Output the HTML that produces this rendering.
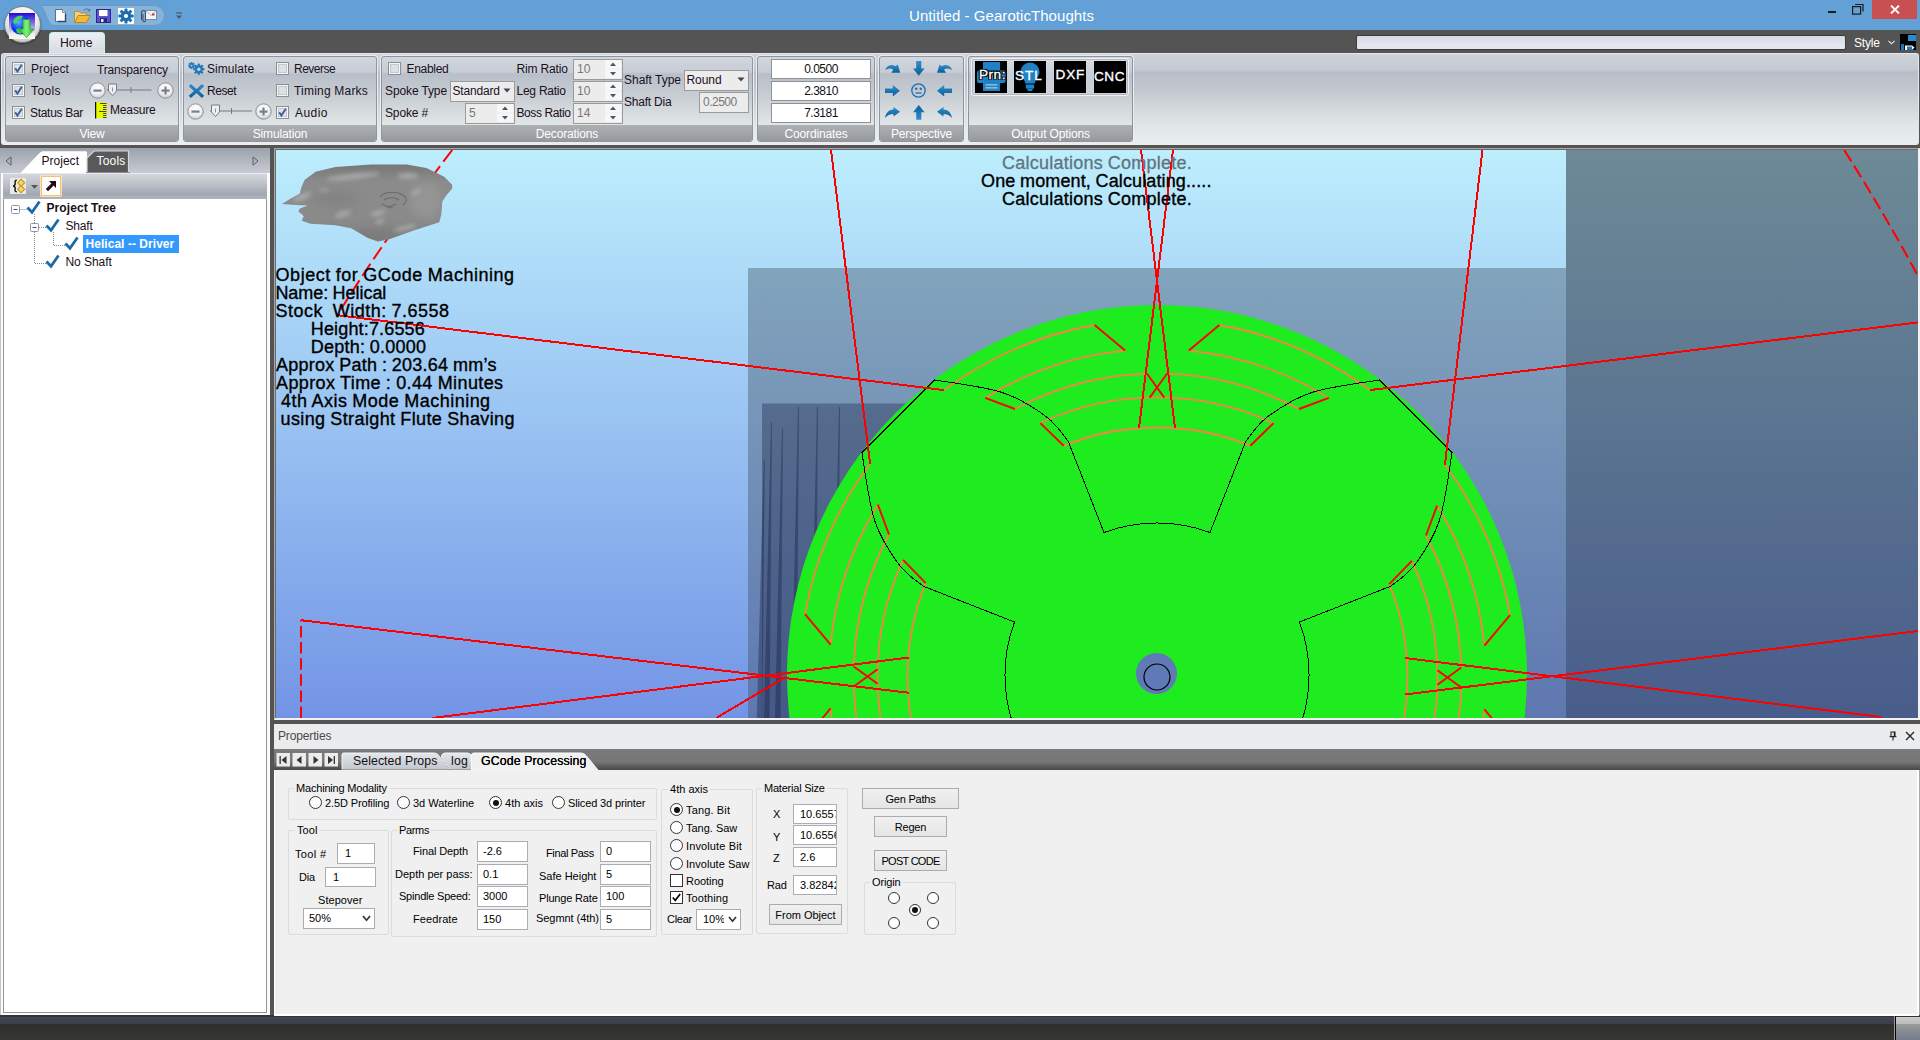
<!DOCTYPE html>
<html><head><meta charset="utf-8"><title>Untitled - GearoticThoughts</title>
<style>
*{box-sizing:border-box;margin:0;padding:0}
html,body{width:1920px;height:1040px;overflow:hidden;background:#545454;font-family:"Liberation Sans",sans-serif;font-size:12px;color:#1a1020}
.abs,.abs>*{position:absolute}
#title{left:0;top:0;width:1920px;height:30px;background:#62a0d5}
#title .cap{left:909px;top:7px;white-space:nowrap;font-size:15px;color:#fff;letter-spacing:-0.2px}
#tabrow{left:0;top:30px;width:1920px;height:23px;background:#545454}
#ribbon{left:1px;top:53px;width:1918px;height:92px;border-radius:3px;border:1px solid #e4e8ec;border-bottom:2px solid #ececec;
 background:linear-gradient(#cfd4db 0,#c4c9d2 16px,#b7bdc7 18px,#c6cbd2 40px,#e0e5e6 70px,#e9efee 90px)}
.grp{top:3px;height:86px;border:1px solid #8f959c;border-radius:3px;box-shadow:0 0 0 1px #e9edf0;
 background:linear-gradient(#d2d7de 0,#c7ccd5 15px,#b9bfc9 17px,#c9ced4 40px,#e2e7e8 69px)}
.grp .lbl{position:absolute;left:0;right:0;bottom:0;height:16px;background:linear-gradient(#aeb1b4,#96999d);color:#fff;text-align:center;font-size:12px;line-height:18.500px;border-radius:0 0 2px 2px;letter-spacing:-.15px}
.t{white-space:nowrap;font-size:12px;line-height:14px;color:#1a1020}
.cb{width:13px;height:13px;border:1px solid #8e8f8f;background:linear-gradient(135deg,#dfe3e8,#fafbfc)}
.cb.on:after{content:"";position:absolute;left:2px;top:1px;width:7px;height:8px;}
.inp{height:21px;border:1px solid #9a9a9c;background:#ececec;font-size:12px;line-height:18px;color:#777;padding-left:3px;white-space:nowrap;overflow:hidden}
.inpw{height:20px;border:1px solid #8e9399;background:#fff;font-size:12px;line-height:18px;color:#111;text-align:center}
</style></head><body>
<div class="abs" id="title">
 <div class="cap" style="letter-spacing:0.058px">Untitled - GearoticThoughts</div>
</div>
<div class="abs" id="tabrow"></div>
<!-- ===== title bar content ===== -->
<div class="abs" style="position:absolute;left:0;top:0;width:1920px;height:53px">
 <!-- QAT pill -->
 <svg style="left:36px;top:4px" width="132" height="24" viewBox="0 0 132 24"><path d="M2.5 1.5 H118.500 a10 10 0 0 1 0 20 H18 C10 21.500 10 1.500 2.5 1.500Z" fill="#86b3da" stroke="#6b97c2" stroke-width="1"/></svg>
 <!-- orb -->
 <div style="left:4px;top:6px;width:37px;height:37px;border-radius:50%;background:radial-gradient(circle at 50% 35%,#ffffff 0,#f1f1f1 45%,#c9c9c9 78%,#a8a8a8 100%);border:1px solid #7a7f86;box-shadow:0 1px 2px rgba(0,0,0,.45)"></div>
 <svg style="left:9px;top:13px" width="26" height="26" viewBox="0 0 26 26">
  <defs><linearGradient id="og" x1="0" y1="0" x2="0" y2="1"><stop offset="0" stop-color="#2406d6"/><stop offset=".45" stop-color="#8f84e2"/><stop offset=".8" stop-color="#eeeef0"/><stop offset="1" stop-color="#f8f8e8"/></linearGradient>
  <radialGradient id="gl" cx=".4" cy=".35" r=".7"><stop offset="0" stop-color="#5ab4ff"/><stop offset=".6" stop-color="#0a3cf0"/><stop offset="1" stop-color="#0416c8"/></radialGradient>
  <linearGradient id="ga" x1="0" y1="0" x2="1" y2="0"><stop offset="0" stop-color="#2fc52f"/><stop offset=".5" stop-color="#7cf27c"/><stop offset="1" stop-color="#1fa81f"/></linearGradient></defs>
  <rect width="26" height="26" fill="url(#og)"/>
  <circle cx="11.600" cy="12" r="9.6" fill="url(#gl)"/>
  <path d="M4 8 C6 3.500 10 2 14 3 L12 6 L9 7 L8 10 L5 11Z" fill="#4fd060"/>
  <path d="M7 16 l4 -1 l3 3 l-2 3 l-4 -1Z" fill="#3cc84c"/>
  <path d="M14 6.500 H21 V16 H25 L17.600 24.800 L10.200 16 H14Z" fill="url(#ga)" stroke="#1c9a1c" stroke-width=".6"/>
 </svg>
 <!-- new doc -->
 <svg style="left:55px;top:9px" width="12" height="14" viewBox="0 0 12 14"><path d="M.5.5H7.500L10.500 3.500V12.500H.5Z" fill="#fff" stroke="#5a6f92" stroke-width="1"/><path d="M3 12.500H10.500V5" stroke="#32456a" stroke-width="1.4" fill="none"/><path d="M7.500.5V3.500H10.500" fill="#dde5f2" stroke="#5a6f92" stroke-width=".8"/></svg>
 <!-- folder -->
 <svg style="left:74px;top:8px" width="17" height="16" viewBox="0 0 17 16"><path d="M.5 14.500V3.500H5l1.500 1.500H12.500V14.500Z" fill="#f5d57a" stroke="#b8923a" stroke-width="1"/><path d="M.8 14.500L4 7.500H16.200L12.500 14.500Z" fill="#f2b838" stroke="#b8862a" stroke-width="1"/><path d="M9.500 2.500C11.500.5 14 .5 15.500 2.500M15.800.8V3H13.600" fill="none" stroke="#4a6aa8" stroke-width="1"/></svg>
 <!-- save -->
 <svg style="left:96px;top:9px" width="15" height="14" viewBox="0 0 15 14"><rect x=".5" y=".5" width="14" height="13" fill="#5a4fd0" stroke="#2c2690" stroke-width="1"/><rect x="3" y="1" width="8.500" height="6" fill="#fff"/><rect x="4" y="9" width="7" height="4.500" fill="#2a2870"/><rect x="5" y="10" width="2.500" height="3" fill="#e8e8f8"/></svg>
 <!-- gear on white -->
 <div style="left:118px;top:8px;width:16px;height:16px;background:#fff"></div>
 <svg style="left:118px;top:8px" width="16" height="16" viewBox="-8 -8 16 16"><g fill="#1a6fb4"><circle r="5.200"/><g id="tt"><rect x="-1.500" y="-7.600" width="3" height="15.200" rx=".5"/></g><use href="#tt" transform="rotate(45)"/><use href="#tt" transform="rotate(90)"/><use href="#tt" transform="rotate(135)"/></g><circle r="2.100" fill="#fff"/></svg>
 <!-- clip + mail -->
 <svg style="left:139px;top:8px" width="18" height="16" viewBox="0 0 18 16"><rect x="6.500" y="2.500" width="11" height="9" fill="#f4f4fa" stroke="#7a88a8" stroke-width="1"/><path d="M6.500 2.500L12 7.500L17.500 2.500" fill="none" stroke="#9aa4c0" stroke-width=".8"/><rect x="13" y="5.500" width="2.500" height="2" fill="#d03030"/><path d="M2.500 12V4.500a2 2 0 0 1 4 0V12.500a1.300 1.300 0 0 1-2.600 0V6" fill="none" stroke="#44506a" stroke-width="1.100"/></svg>
 <!-- qat dropdown -->
 <svg style="left:175px;top:12px" width="8" height="8" viewBox="0 0 8 8"><path d="M1 1H7" stroke="#4a5a70" stroke-width="1.200"/><path d="M1 3.500H7L4 7Z" fill="#4a5a70"/></svg>
 <!-- window controls -->
 <div style="left:1872px;top:0;width:45px;height:19px;background:#c85050"></div>
 <svg style="left:1890px;top:5px" width="10" height="9" viewBox="0 0 10 9"><path d="M1 .5L9 8.500M9 .5L1 8.500" stroke="#fff" stroke-width="1.800"/></svg>
 <svg style="left:1852px;top:4px" width="12" height="11" viewBox="0 0 12 11"><path d="M3 .5H11V7.500" fill="none" stroke="#1c1c1c" stroke-width="1.200"/><rect x=".6" y="2.600" width="8" height="7.500" fill="none" stroke="#1c1c1c" stroke-width="1.200"/></svg>
 <div style="left:1828px;top:11px;width:8px;height:2px;background:#1c1c1c"></div>
 <!-- home tab -->
 <div style="left:49px;top:32px;width:56px;height:22px;border-radius:4px 4px 0 0;background:linear-gradient(#eceff3,#d6dae1);border:1px solid #c8f0f4;border-bottom:none"></div>
 <div class="t" style="left:60px;top:36px;font-size:12.200px">Home</div>
 <!-- progress + style -->
 <div style="left:1356px;top:35px;width:490px;height:15px;border:1px solid #3c3c3c;border-radius:2px;background:linear-gradient(#d4d8e2,#e2e5ee 60%,#e6e8f0)"></div>
 <div class="t" style="left:1854px;top:36px;color:#fff;letter-spacing:-.2px">Style</div>
 <svg style="left:1888px;top:40px" width="7" height="5" viewBox="0 0 7 5"><path d="M.5.8L3.500 3.800L6.500.8" fill="none" stroke="#e8e8e8" stroke-width="1.100"/></svg>
 <svg style="left:1900px;top:34px" width="16" height="16" viewBox="0 0 16 16"><rect width="16" height="16" fill="#000"/><rect x="8" y="1" width="8" height="6" fill="#2a8ad0"/><rect x="1" y="10" width="3" height="6" fill="#1a78c0"/><path d="M5 16V11.500H12L14.500 13.500L12 16Z" fill="#fff"/><rect x="7" y="12.500" width="5" height="3.500" fill="#1a78c0"/></svg>
</div>
<div class="abs" id="ribbon" style="position:absolute"></div>
<div class="abs" id="rg" style="position:absolute;left:0;top:0;width:1920px;height:150px">
<svg width="0" height="0" style="position:absolute"><defs>
 <linearGradient id="bl" x1="0" y1="0" x2="0" y2="1"><stop offset="0" stop-color="#2f8fce"/><stop offset="1" stop-color="#0b5c98"/></linearGradient>
 <radialGradient id="rb" cx=".5" cy=".3" r=".8"><stop offset="0" stop-color="#ffffff"/><stop offset=".6" stop-color="#e9ebee"/><stop offset="1" stop-color="#b9bdc4"/></radialGradient>
 <symbol id="chk" viewBox="0 0 13 13"><rect x=".5" y=".5" width="12" height="12" fill="#f3f5f7" stroke="#8e8f8f"/><rect x="2.500" y="2.500" width="8" height="8" fill="#dfe3e8" stroke="#c4c8ce" stroke-width="1"/><path d="M3.200 6.200L5.400 9.600L9.800 2.800" fill="none" stroke="#3a5f9a" stroke-width="1.900"/></symbol>
 <symbol id="unc" viewBox="0 0 13 13"><rect x=".5" y=".5" width="12" height="12" fill="#f3f5f7" stroke="#8e8f8f"/><rect x="2.500" y="2.500" width="8" height="8" fill="#dde1e6" stroke="#c4c8ce" stroke-width="1"/></symbol>
 <symbol id="minus" viewBox="0 0 17 17"><circle cx="8.500" cy="8.500" r="7.700" fill="url(#rb)" stroke="#8a8e94" stroke-width="1"/><rect x="4.500" y="7.500" width="8" height="2.200" fill="#7a7e86"/></symbol>
 <symbol id="plus" viewBox="0 0 17 17"><circle cx="8.500" cy="8.500" r="7.700" fill="url(#rb)" stroke="#8a8e94" stroke-width="1"/><rect x="4.500" y="7.500" width="8" height="2.200" fill="#7a7e86"/><rect x="7.400" y="4.500" width="2.200" height="8" fill="#7a7e86"/></symbol>
 <symbol id="sld" viewBox="0 0 44 14"><path d="M1 7H43" stroke="#767b84" stroke-width="1"/><path d="M22.500 4V10" stroke="#767b84" stroke-width="1"/><path d="M2.500 1H10.500V8L6.500 12.500L2.500 8Z" fill="#eef0f3" stroke="#767b84" stroke-width="1"/><path d="M6.500 4.500V8.500" stroke="#8a8f98" stroke-width="1"/></symbol>
 <symbol id="spin" viewBox="0 0 16 18"><rect x="0" y="0" width="16" height="8.500" fill="#f6f7f9"/><rect x="0" y="9.500" width="16" height="8.500" fill="#f6f7f9"/><path d="M5 6L8 2.500L11 6Z" fill="#555"/><path d="M5 12L8 15.500L11 12Z" fill="#555"/></symbol>
 <symbol id="cTL" viewBox="0 0 16 10" overflow="visible"><path d="M0 6.300C1.500 2 6 -.6 10.400 2.300L12.800 .5L15.200 8.700H6.300L8.300 5.700C6 3.700 2.500 4.300 0 6.300Z" fill="url(#bl)"/></symbol>
 <symbol id="cBL" viewBox="0 0 15 11" overflow="visible"><path d="M15 4.700L8.500 0V2.600C4 2.600 .8 6 0 10.900C2 8 5 6.900 8.500 6.900V9.500Z" fill="url(#bl)"/></symbol>
 <symbol id="aRT" viewBox="0 0 15 12" overflow="visible"><path d="M0 3.500H7.800V0L15 5.800L7.800 11.600V8.100H0Z" fill="url(#bl)"/></symbol>
 <symbol id="aDN" viewBox="0 0 12 15" overflow="visible"><path d="M3.200 0H8.300V7.600H11.600L5.750 14.800L0 7.600H3.200Z" fill="url(#bl)"/></symbol>
 <symbol id="arS" viewBox="0 0 16 16"><path d="M1 5.500H8.500V1.500L15.500 8L8.500 14.500V10.500H1Z" fill="url(#bl)"/></symbol>
 <symbol id="arC" viewBox="0 0 16 16"><path d="M.8 9.500C2.500 4 8 2.200 11.200 5.200L13.300 3.200L15.200 12.300L6.500 10.500L8.800 8C6.500 6.500 3.500 7.500.8 9.500Z" fill="url(#bl)"/></symbol>
</defs></svg>

<!-- ===== View ===== -->
<div class="grp" style="left:5px;top:56px;width:174px"><div class="lbl">View</div></div>
<svg style="left:12px;top:62px" width="13" height="13"><use href="#chk"/></svg>
<svg style="left:12px;top:84px" width="13" height="13"><use href="#chk"/></svg>
<svg style="left:12px;top:106px" width="13" height="13"><use href="#chk"/></svg>
<div class="t" style="left:31px;top:62px;letter-spacing:0.092px">Project</div>
<div class="t" style="left:31px;top:84px;letter-spacing:0.397px">Tools</div>
<div class="t" style="left:30px;top:106px;letter-spacing:-0.303px">Status Bar</div>
<div class="t" style="left:97px;top:63px;letter-spacing:-0.177px">Transparency</div>
<svg style="left:88.500px;top:81.500px" width="17" height="17"><use href="#minus"/></svg>
<svg style="left:156.500px;top:81.500px" width="17" height="17"><use href="#plus"/></svg>
<svg style="left:105.500px;top:83px" width="46" height="14" viewBox="0 0 46 14"><path d="M1 7H45.500" stroke="#767b84" stroke-width="1"/><path d="M25 4V10" stroke="#767b84" stroke-width="1"/><path d="M2.500 1H10.500V8L6.500 12.500L2.500 8Z" fill="#eef0f3" stroke="#767b84" stroke-width="1"/><path d="M6.500 4.500V8.500" stroke="#8a8f98" stroke-width="1"/></svg>
<svg style="left:95px;top:102px" width="12" height="17" viewBox="0 0 12 17"><rect x="0" y="0" width="11.500" height="16" fill="#e6fb00"/><path d="M.6 0V16.500" stroke="#111" stroke-width="1.300"/><path d="M5 1.500H11.500M8 3.500H11.500M8 5.500H11.500M8 7.500H11.500M4 9.500H11.500M8 11.500H11.500M8 13.500H11.500M8 15.500H11.500" stroke="#333" stroke-width=".9"/></svg>
<div class="t" style="left:110px;top:103px;letter-spacing:-0.155px">Measure</div>

<!-- ===== Simulation ===== -->
<div class="grp" style="left:183px;top:56px;width:194px"><div class="lbl">Simulation</div></div>
<svg style="left:188px;top:62px" width="17" height="13" viewBox="0 0 17 13"><g fill="#1f78bc"><g transform="translate(10.800,7.200)"><circle r="3.900"/><g id="g8"><rect x="-1.100" y="-5.600" width="2.200" height="11.200"/></g><use href="#g8" transform="rotate(45)"/><use href="#g8" transform="rotate(90)"/><use href="#g8" transform="rotate(135)"/></g><g transform="translate(3.600,3.600)"><circle r="2.300"/><g id="g5"><rect x="-.75" y="-3.500" width="1.500" height="7"/></g><use href="#g5" transform="rotate(45)"/><use href="#g5" transform="rotate(90)"/><use href="#g5" transform="rotate(135)"/></g></g><circle cx="10.800" cy="7.200" r="1.700" fill="#d0d4da"/><circle cx="3.600" cy="3.600" r=".9" fill="#d0d4da"/></svg>
<div class="t" style="left:207px;top:62px;letter-spacing:0.064px">Simulate</div>
<svg style="left:188px;top:83px" width="17" height="16" viewBox="0 0 17 16"><path d="M2.800 1L8.500 6L14 1L16.200 3.200L11 8L16.200 12.800L14 15L8.500 10L2.800 15L.8 12.800L6 8L.8 3.200Z" fill="url(#bl)"/></svg>
<div class="t" style="left:207px;top:84px;letter-spacing:-0.432px">Reset</div>
<svg style="left:186.500px;top:102.500px" width="17" height="17"><use href="#minus"/></svg>
<svg style="left:254.500px;top:102.500px" width="17" height="17"><use href="#plus"/></svg>
<svg style="left:208.500px;top:104px" width="44" height="14"><use href="#sld"/></svg>
<svg style="left:276px;top:62px" width="13" height="13"><use href="#unc"/></svg>
<svg style="left:276px;top:84px" width="13" height="13"><use href="#unc"/></svg>
<svg style="left:276px;top:106px" width="13" height="13"><use href="#chk"/></svg>
<div class="t" style="left:294px;top:62px;letter-spacing:-0.498px">Reverse</div>
<div class="t" style="left:294px;top:84px;letter-spacing:0.203px">Timing Marks</div>
<div class="t" style="left:295px;top:106px;letter-spacing:0.439px">Audio</div>

<!-- ===== Decorations ===== -->
<div class="grp" style="left:381px;top:56px;width:372px"><div class="lbl">Decorations</div></div>
<svg style="left:388px;top:62px" width="13" height="13"><use href="#unc"/></svg>
<div class="t" style="left:406.5px;top:62px;letter-spacing:-0.292px">Enabled</div>
<div class="t" style="left:385px;top:84px;letter-spacing:-0.117px">Spoke Type</div>
<div class="inp" style="left:450px;top:81px;width:65px;color:#1a1020;padding-left:1.500px;letter-spacing:-0.188px">Standard</div>
<svg style="left:503px;top:88px" width="8" height="5" viewBox="0 0 8 5"><path d="M.5.5H7.500L4 4.500Z" fill="#444"/></svg>
<div class="t" style="left:385px;top:106px;letter-spacing:-0.150px">Spoke #</div>
<div class="inp" style="left:465px;top:103px;width:50px">5</div><svg style="left:497px;top:104px" width="16" height="18"><use href="#spin"/></svg>
<div class="t" style="left:516.5px;top:62px;letter-spacing:-0.165px">Rim Ratio</div>
<div class="t" style="left:516.5px;top:84px;letter-spacing:-0.242px">Leg Ratio</div>
<div class="t" style="left:516.5px;top:106px;letter-spacing:-0.403px">Boss Ratio</div>
<div class="inp" style="left:573px;top:59px;width:50px">10</div><svg style="left:605px;top:60px" width="16" height="18"><use href="#spin"/></svg>
<div class="inp" style="left:573px;top:81px;width:50px">10</div><svg style="left:605px;top:82px" width="16" height="18"><use href="#spin"/></svg>
<div class="inp" style="left:573px;top:103px;width:50px">14</div><svg style="left:605px;top:104px" width="16" height="18"><use href="#spin"/></svg>
<div class="t" style="left:624px;top:73px;letter-spacing:-0.016px">Shaft Type</div>
<div class="inp" style="left:684px;top:70px;width:65px;color:#1a1020;padding-left:1.500px;letter-spacing:-0.055px">Round</div>
<svg style="left:737px;top:77px" width="8" height="5" viewBox="0 0 8 5"><path d="M.5.5H7.500L4 4.500Z" fill="#444"/></svg>
<div class="t" style="left:624px;top:95px;letter-spacing:-0.207px">Shaft Dia</div>
<div class="inp" style="left:699px;top:92px;width:50px;letter-spacing:-0.501px">0.2500</div>

<!-- ===== Coordinates ===== -->
<div class="grp" style="left:757px;top:56px;width:118px"><div class="lbl">Coordinates</div></div>
<div class="inpw" style="left:771px;top:59px;width:100px;letter-spacing:-0.501px">0.0500</div>
<div class="inpw" style="left:771px;top:81px;width:100px;letter-spacing:-0.501px">2.3810</div>
<div class="inpw" style="left:771px;top:103px;width:100px;letter-spacing:-0.501px">7.3181</div>

<!-- ===== Perspective ===== -->
<div class="grp" style="left:879px;top:56px;width:85px"><div class="lbl">Perspective</div></div>
<svg style="left:884.800px;top:64px" width="16" height="10" viewBox="0 0 16 10"><use href="#cTL"/></svg>
<svg style="left:912.800px;top:61px" width="12" height="15" viewBox="0 0 12 15"><use href="#aDN"/></svg>
<svg style="left:937px;top:64px" width="16" height="10" viewBox="0 0 16 10"><use href="#cTL" transform="translate(15.300,0) scale(-1,1)"/></svg>
<svg style="left:885px;top:85px" width="15" height="12" viewBox="0 0 15 12"><use href="#aRT"/></svg>
<svg style="left:910px;top:82px" width="17" height="17" viewBox="0 0 17 17"><circle cx="8.500" cy="8.500" r="6.700" fill="none" stroke="#1670b0" stroke-width="1.300"/><circle cx="6.200" cy="6.700" r="1.200" fill="#1670b0"/><circle cx="10.800" cy="6.700" r="1.200" fill="#1670b0"/><path d="M5.500 11H11.500" stroke="#1670b0" stroke-width="1.300"/></svg>
<svg style="left:937.200px;top:85px" width="15" height="12" viewBox="0 0 15 12"><use href="#aRT" transform="translate(15,0) scale(-1,1)"/></svg>
<svg style="left:885px;top:107px" width="15" height="11" viewBox="0 0 15 11"><use href="#cBL"/></svg>
<svg style="left:912.800px;top:105.400px" width="12" height="15" viewBox="0 0 12 15"><use href="#aDN" transform="translate(0,14.800) scale(1,-1)"/></svg>
<svg style="left:937.200px;top:107px" width="15" height="11" viewBox="0 0 15 11"><use href="#cBL" transform="translate(15,0) scale(-1,1)"/></svg>

<!-- ===== Output ===== -->
<div class="grp" style="left:968px;top:56px;width:165px"><div class="lbl">Output Options</div></div>
<div style="left:971px;top:58px;width:158px;height:38px;border:1px solid #eef1f3;border-radius:3px;box-shadow:0 0 0 1px #b4b9c0 inset;background:linear-gradient(#d9dde3,#c9ced6 45%,#cdd2d8)"></div>
<div style="left:975px;top:61px;width:32px;height:32px;background:#000"></div>
<div style="left:1014px;top:61px;width:32px;height:32px;background:#000"></div>
<div style="left:1054px;top:61px;width:32px;height:32px;background:#000"></div>
<div style="left:1094px;top:61px;width:32px;height:32px;background:#000"></div>
<svg style="left:975px;top:61px" width="32" height="32" viewBox="0 0 32 32"><g fill="#1f82c6"><rect x="8" y="1" width="17" height="8"/><rect x="2" y="9.500" width="28.600" height="12.500" rx="2"/><rect x="8" y="20" width="17" height="10"/></g><rect x="10.500" y="23" width="12" height="1.600" fill="#8fb8d6"/><rect x="10.500" y="26" width="12" height="1.600" fill="#8fb8d6"/></svg>
<svg style="left:1014px;top:61px" width="32" height="32" viewBox="0 0 32 32"><g fill="#1f82c6"><path d="M16 1.500a9.500 9.500 0 0 1 9.500 9.500c0 4.500-4 6.500-4.800 11.500h-9.400c-.8-5-4.800-7-4.800-11.500A9.500 9.500 0 0 1 16 1.500Z"/><rect x="11.800" y="23.500" width="8.400" height="4"/><path d="M12.800 27.500h6.400l-1.200 2.500h-4Z"/></g></svg>
<div class="t" style="left:979px;top:67px;color:#fff;font-size:13.600px;line-height:16px;-webkit-text-stroke:.3px #fff;text-shadow:1px 0 0 #000,-1px 0 0 #000,0 1px 0 #000,0 -1px 0 #000,1px 1px 0 #000,-1px -1px 0 #000,1px -1px 0 #000,-1px 1px 0 #000;letter-spacing:0.491px">Prn:</div>
<div class="t" style="left:1015px;top:68.300px;color:#fff;font-size:13.600px;line-height:16px;-webkit-text-stroke:.35px #fff;letter-spacing:0.954px">STL</div>
<div class="t" style="left:1055.600px;top:67px;color:#fff;font-size:13.600px;line-height:16px;-webkit-text-stroke:.35px #fff;letter-spacing:0.804px">DXF</div>
<div class="t" style="left:1094px;top:69.100px;color:#fff;font-size:13.600px;line-height:16px;-webkit-text-stroke:.35px #fff;letter-spacing:0.516px">CNC</div>
</div>
</div>
<!-- ===== left panel ===== -->
<div class="abs" id="left" style="position:absolute;left:0;top:0;width:276px;height:1040px">
 <div style="left:0;top:148px;width:270px;height:867px;background:#fbfbfb;border-left:1px solid #c4c6ca"></div>
 <div style="left:0;top:148px;width:270px;height:25px;background:linear-gradient(#9ba2ac,#c8cbd2)"></div>
 <svg style="left:5px;top:156px" width="7" height="10" viewBox="0 0 7 10"><path d="M6 .8L1 5L6 9.200Z" fill="none" stroke="#5a5f68" stroke-width="1"/></svg>
 <svg style="left:252px;top:156px" width="7" height="10" viewBox="0 0 7 10"><path d="M1 .8L6 5L1 9.200Z" fill="none" stroke="#5a5f68" stroke-width="1"/></svg>
 <svg style="left:18px;top:150.600px" width="70" height="24" viewBox="0 0 70 24"><path d="M1 24L22.500 1.500Q23.500 .8 25 .8H68.500V24Z" fill="#fff" stroke="#fff" stroke-width="1"/></svg>
 <svg style="left:86px;top:150px" width="44" height="23" viewBox="0 0 44 23"><path d="M1 22.500V8L7 2Q8 1 9.500 1H42.500V22.500Z" fill="#595959" stroke="#d8d8d8" stroke-width="1.200"/><path d="M0 22.500H44" stroke="#8a8d92" stroke-width="1"/></svg>
 <div class="t" style="left:41.500px;top:154px;letter-spacing:0.020px">Project</div>
 <div class="t" style="left:96.500px;top:154px;color:#fff;letter-spacing:0.197px">Tools</div>
 <div style="left:3px;top:173px;width:264px;height:26px;background:linear-gradient(#d3d6dc,#c0c5cc 35%,#a2a9b3 80%,#aeb4bd);border-top:1px solid #e8eaee"></div>
 <div style="left:3px;top:199px;width:264px;height:814px;background:#fff;border:1px solid #929498;border-top:none"></div>
 <div style="left:10px;top:178px;width:16px;height:16px;background:#e9e9e9"></div>
 <svg style="left:10px;top:178px" width="16" height="16" viewBox="0 0 16 16"><path d="M6.800 2.300C4.300 2.300 5.200 4 5.200 5.500C5.200 7 4.600 7.800 3.200 8C4.600 8.200 5.200 9 5.200 10.500C5.200 12 4.300 13.700 6.800 13.700" fill="none" stroke="#111" stroke-width="1.400"/><path d="M11 1.200L14.600 4.800L11 8.400L7.800 4.800Z" fill="#f6d670" stroke="#c8960c" stroke-width="1.100"/><path d="M11 7.600L14.600 11.200L11 14.800L7.800 11.200Z" fill="#f6d670" stroke="#c8960c" stroke-width="1.100"/></svg>
 <svg style="left:31px;top:185px" width="7" height="4" viewBox="0 0 7 4"><path d="M0 0H7L3.500 3.800Z" fill="#555"/></svg>
 <div style="left:41px;top:176px;width:20px;height:20px;background:#fff;border:1px solid #f4c078;box-shadow:0 0 0 1px #fbe0b8;border-radius:1px"></div>
 <svg style="left:45px;top:180px" width="12" height="12" viewBox="0 0 12 12"><path d="M4 1H11V8L8.600 5.600L3 11.200L.8 9L6.400 3.400Z" fill="#2a0a12"/></svg>
 <!-- tree -->
 <svg style="left:8px;top:200px" width="80" height="72" viewBox="0 0 80 72">
  <g stroke="#8a8a8a" stroke-width="1" stroke-dasharray="1 1" fill="none"><path d="M12.500 9.500H19"/><path d="M26.500 14V23"/><path d="M31 27.500H38"/><path d="M26.500 32V63.500H38"/><path d="M45.500 32V45.500H57"/></g>
  <g fill="#fff" stroke="#8e959e" stroke-width="1"><rect x="3.500" y="5.500" width="8" height="8" rx="1"/><rect x="22.500" y="23.500" width="8" height="8" rx="1"/></g>
  <path d="M5.500 9.500H9.500M24.500 27.500H28.500" stroke="#3050a0" stroke-width="1"/>
  <g fill="none" stroke="#1a6aa4" stroke-width="2.800" stroke-linejoin="miter"><path d="M19.500 7.500L24 12.200L31.500 1.500"/><path d="M38.500 25.500L43 30.200L50.500 19.500"/><path d="M57.500 43.500L62 48.200L69.500 37.500"/><path d="M38.500 61.500L43 66.200L50.500 55.500"/></g>
 </svg>
 <div class="t" style="left:46.500px;top:201px;font-weight:bold;letter-spacing:0.075px">Project Tree</div>
 <div class="t" style="left:65.500px;top:219px;letter-spacing:-0.166px">Shaft</div>
 <div style="left:83px;top:235px;width:96px;height:18px;background:#3399ff"></div>
 <div class="t" style="left:85.500px;top:237px;font-weight:bold;color:#fff;letter-spacing:0.044px">Helical -- Driver</div>
 <div class="t" style="left:65.500px;top:255px;letter-spacing:-0.063px">No Shaft</div>
</div>
<!-- status bar -->
<div style="position:absolute;left:0;top:1015px;width:1920px;height:25px;background:linear-gradient(#333 0,#333 1.500px,#434552 1.500px,#3c3e4a 9px,#2e2e2e 9px,#363634 100%)"></div>
<div style="position:absolute;left:1894px;top:1016px;width:1.200px;height:24px;background:#999"></div><div style="position:absolute;left:1895px;top:1016px;width:1.300px;height:24px;background:#050505"></div>
<div style="position:absolute;left:1896.300px;top:1016.500px;width:23.700px;height:23.500px;background:linear-gradient(#cdcdcd 0,#b9b9b9 7.500px,#989a9a 7.500px,#737c8a 100%)"></div>
<!-- ===== viewport ===== -->
<style>.vl{position:absolute;font-size:18px;line-height:18px;color:#000;white-space:pre;word-spacing:-.5px;-webkit-text-stroke:.35px #000}</style>
<div style="position:absolute;left:276px;top:150px;width:1642px;height:568px;overflow:hidden">
<svg id="vp" width="1642" height="568" viewBox="0 0 1642 568">
<defs>
<linearGradient id="bg" x1="0" y1="0" x2="0" y2="1"><stop offset="0" stop-color="#bdeefd"/><stop offset="1" stop-color="#7394e6"/></linearGradient>
<clipPath id="gc"><circle cx="881.0" cy="525.0" r="370"/></clipPath>
</defs>
<rect width="1642" height="568" fill="url(#bg)"/>
<rect x="472" y="118" width="818" height="450" fill="#3c4a5a" fill-opacity="0.38"/>
<rect x="1290" y="0" width="352" height="568" fill="#1e2630" fill-opacity="0.5"/>
<rect x="486" y="253.5" width="200" height="314.5" fill="#1e2846" fill-opacity="0.38"/>
<g fill="#141e3c" fill-opacity=".38"><path d="M487.8 310.0 L480.8 568 L486.3 568 L488.8 310.0Z"/><path d="M495.0 272.0 L488.0 568 L493.5 568 L496.0 272.0Z"/><path d="M506.0 278.0 L499.0 568 L504.5 568 L507.0 278.0Z"/><path d="M522.0 257.0 L515.0 568 L520.5 568 L523.0 257.0Z"/><path d="M541.0 257.0 L534.0 568 L539.5 568 L542.0 257.0Z"/><path d="M563.0 257.0 L556.0 568 L561.5 568 L564.0 257.0Z"/></g>
<circle cx="881.0" cy="525.0" r="370" fill="#1fec1f"/>
<g clip-path="url(#gc)" fill="none">
<path d="M818.6 175.0 A356.0 356.0 0 0 0 668.2 240.1 M849.1 200.6 A326.5 326.5 0 0 0 709.2 247.9 M739.0 259.0 A302.0 302.0 0 0 1 871.0 223.7 M943.4 175.0 A356.0 356.0 0 0 1 1093.8 240.1 M912.9 200.6 A326.5 326.5 0 0 1 1052.8 247.9 M1023.0 259.0 A302.0 302.0 0 0 0 891.0 223.7 M764.4 273.1 A278.0 278.0 0 0 1 997.6 273.1 M787.7 295.7 A248.0 248.0 0 0 1 974.3 295.7 M529.0 588.9 A356.0 356.0 0 0 0 594.1 739.3 M554.6 558.4 A326.5 326.5 0 0 0 601.9 698.3 M613.0 668.5 A302.0 302.0 0 0 1 577.7 536.5 M529.0 464.1 A356.0 356.0 0 0 1 594.1 313.7 M554.6 494.6 A326.5 326.5 0 0 1 601.9 354.7 M613.0 384.5 A302.0 302.0 0 0 0 577.7 516.5 M627.1 643.1 A278.0 278.0 0 0 1 627.1 409.9 M649.7 619.8 A248.0 248.0 0 0 1 649.7 433.2 M1234.0 465.1 A356.0 356.0 0 0 0 1168.9 314.7 M1208.4 495.6 A326.5 326.5 0 0 0 1161.1 355.7 M1150.0 385.5 A302.0 302.0 0 0 1 1185.3 517.5 M1234.0 589.9 A356.0 356.0 0 0 1 1168.9 740.3 M1208.4 559.4 A326.5 326.5 0 0 1 1161.1 699.3 M1150.0 669.5 A302.0 302.0 0 0 0 1185.3 537.5 M1135.9 410.9 A278.0 278.0 0 0 1 1135.9 644.1 M1113.3 434.2 A248.0 248.0 0 0 1 1113.3 620.8 M943.4 878.5 A356.0 356.0 0 0 0 1093.8 813.4 M912.9 852.9 A326.5 326.5 0 0 0 1052.8 805.6 M1023.0 794.5 A302.0 302.0 0 0 1 891.0 829.8 M818.6 878.5 A356.0 356.0 0 0 1 668.2 813.4 M849.1 852.9 A326.5 326.5 0 0 1 709.2 805.6 M739.0 794.5 A302.0 302.0 0 0 0 871.0 829.8 M997.6 780.4 A278.0 278.0 0 0 1 764.4 780.4 M974.3 757.8 A248.0 248.0 0 0 1 787.7 757.8 " stroke="#f98148" stroke-width="1.8"/>
</g>
<path d="M934.0 382.5 A152.0 152.0 0 0 0 828.0 382.5 L792.2 291.3 C788.6 287.2 781.3 274.8 770.3 266.7 C759.3 258.6 745.0 248.7 726.4 242.6 C707.8 236.4 669.9 232.0 658.6 229.9 L585.9 302.6 C588.0 313.9 592.4 351.8 598.6 370.4 C604.7 389.0 614.6 403.3 622.7 414.3 C630.8 425.3 643.2 432.6 647.3 436.2 L738.5 472.0 A152.0 152.0 0 0 0 738.5 578.0 L647.3 613.8 C643.2 617.4 630.8 624.7 622.7 635.7 C614.6 646.7 604.7 661.0 598.6 679.6 C592.4 698.2 588.0 736.1 585.9 747.4 L658.6 820.1 C669.9 818.0 707.8 813.6 726.4 807.4 C745.0 801.3 759.3 791.4 770.3 783.3 C781.3 775.2 788.6 762.8 792.2 758.7 L828.0 667.5 A152.0 152.0 0 0 0 934.0 667.5 L969.8 758.7 C973.4 762.8 980.7 775.2 991.7 783.3 C1002.7 791.4 1017.0 801.3 1035.6 807.4 C1054.2 813.6 1092.1 818.0 1103.4 820.1 L1176.1 747.4 C1174.0 736.1 1169.6 698.2 1163.4 679.6 C1157.3 661.0 1147.4 646.7 1139.3 635.7 C1131.2 624.7 1118.8 617.4 1114.7 613.8 L1023.5 578.0 A152.0 152.0 0 0 0 1023.5 472.0 L1114.7 436.2 C1118.8 432.6 1131.2 425.3 1139.3 414.3 C1147.4 403.3 1157.3 389.0 1163.4 370.4 C1169.6 351.8 1174.0 313.9 1176.1 302.6 L1103.4 229.9 C1092.1 232.0 1054.2 236.4 1035.6 242.6 C1017.0 248.7 1002.7 258.6 991.7 266.7 C980.7 274.8 973.4 287.2 969.8 291.3 L934.0 382.5 Z" fill="none" stroke="#000" stroke-width="1" shape-rendering="crispEdges"/>
<g clip-path="url(#gc)" fill="none"><path d="M818.6 175.0 L849.1 200.6 M709.2 247.9 L739.0 259.0 M871.0 223.7 L888.3 247.6 M764.4 273.1 L787.7 295.7 M943.4 175.0 L912.9 200.6 M1052.8 247.9 L1023.0 259.0 M891.0 223.7 L873.7 247.6 M997.6 273.1 L974.3 295.7 M529.0 588.9 L554.6 558.4 M601.9 698.3 L613.0 668.5 M577.7 536.5 L601.6 519.2 M627.1 643.1 L649.7 619.8 M529.0 464.1 L554.6 494.6 M601.9 354.7 L613.0 384.5 M577.7 516.5 L601.6 533.8 M627.1 409.9 L649.7 433.2 M1234.0 465.1 L1208.4 495.6 M1161.1 355.7 L1150.0 385.5 M1185.3 517.5 L1161.4 534.8 M1135.9 410.9 L1113.3 434.2 M1234.0 589.9 L1208.4 559.4 M1161.1 699.3 L1150.0 669.5 M1185.3 537.5 L1161.4 520.2 M1135.9 644.1 L1113.3 620.8 M943.4 878.5 L912.9 852.9 M1052.8 805.6 L1023.0 794.5 M891.0 829.8 L873.7 805.9 M997.6 780.4 L974.3 757.8 M818.6 878.5 L849.1 852.9 M709.2 805.6 L739.0 794.5 M871.0 829.8 L888.3 805.9 M764.4 780.4 L787.7 757.8 " stroke="#ff0000" stroke-width="1.9"/></g>
<circle cx="880.5" cy="523.5" r="20.5" fill="#5f7ab7"/>
<circle cx="881.0" cy="527" r="13" fill="none" stroke="#000" stroke-width="1.2"/>
<path d="M865.0 0.0 L899.0 278.0 M897.0 0.0 L863.0 278.0 M25.0 470.2 L633.0 542.8 M156.5 568.0 L633.0 507.5 M508.0 528.0 L440.0 568.0 M1129.0 508.0 L1605.0 567.0 M1129.0 544.5 L1642.0 481.0 M61.3 165.2 L668.2 240.1 M1642.0 172.4 L1093.8 240.1 M555.0 0.0 L594.1 313.7 M1206.5 0.0 L1168.9 314.7 " fill="none" stroke="#ff0000" stroke-width="2" shape-rendering="crispEdges"/>
<path d="M176.25 0 Q111.19999999999999 84.69999999999999 61.30000000000001 165.2" fill="none" stroke="#ff0000" stroke-width="2" stroke-dasharray="14.6 5.4"/>
<path d="M25.0 470.0 L25.0 568.0 " fill="none" stroke="#ff0000" stroke-width="2" stroke-dasharray="11.5 4.6" stroke-dashoffset="10.1"/>
<path d="M1568.2 0 Q1608 63 1642 126" fill="none" stroke="#ff0000" stroke-width="2" stroke-dasharray="13.3 5.3"/>
<defs><linearGradient id="hg" x1="0" y1="0" x2="0" y2="1"><stop offset="0" stop-color="#777"/><stop offset=".22" stop-color="#8b8b8b"/><stop offset=".7" stop-color="#8a8a8a"/><stop offset="1" stop-color="#808080"/></linearGradient>
<filter id="hb" x="-30%" y="-30%" width="160%" height="160%"><feGaussianBlur stdDeviation="2"/></filter><filter id="hb2" x="-30%" y="-30%" width="160%" height="160%"><feGaussianBlur stdDeviation="4"/></filter><clipPath id="hc"><path d="M5.9 54.0 L14.8 48.5 L23.8 43.6 L25.2 37.7 L28.7 29.7 L39.6 21.8 L59.4 16.9 L95.0 14.4 L130.6 14.4 L150.4 17.9 L168.2 26.8 L176.2 34.7 L176.2 38.6 L170.2 45.6 L166.3 51.5 L165.3 64.4 L163.3 72.3 L138.5 80.2 L113.8 89.1 L101.9 91.6 L92.0 88.1 L75.2 78.2 L59.4 75.3 L34.6 73.8 L25.7 70.8 L27.7 66.4 L26.2 64.4 L22.3 61.4 L23.8 58.4 L31.7 55.5 L19.8 55.0Z"/></clipPath></defs>
<path d="M5.9 54.0 L14.8 48.5 L23.8 43.6 L25.2 37.7 L28.7 29.7 L39.6 21.8 L59.4 16.9 L95.0 14.4 L130.6 14.4 L150.4 17.9 L168.2 26.8 L176.2 34.7 L176.2 38.6 L170.2 45.6 L166.3 51.5 L165.3 64.4 L163.3 72.3 L138.5 80.2 L113.8 89.1 L101.9 91.6 L92.0 88.1 L75.2 78.2 L59.4 75.3 L34.6 73.8 L25.7 70.8 L27.7 66.4 L26.2 64.4 L22.3 61.4 L23.8 58.4 L31.7 55.5 L19.8 55.0Z" fill="url(#hg)"/>
<g clip-path="url(#hc)"><g filter="url(#hb2)"><ellipse cx="150" cy="50" rx="16" ry="18" fill="#9c9c9c" opacity=".55"/><ellipse cx="60" cy="48" rx="22" ry="8" fill="#7c7c7c" opacity=".5"/><ellipse cx="100" cy="86" rx="30" ry="6" fill="#747474" opacity=".5"/></g>
<g filter="url(#hb)" fill="#bdbdbd" opacity=".62"><ellipse cx="77" cy="26.500" rx="27" ry="2.800" transform="rotate(-6 77 26.500)"/><ellipse cx="132" cy="26" rx="11" ry="3"/><ellipse cx="67" cy="64" rx="9" ry="2.500" transform="rotate(-18 67 64)"/><ellipse cx="102" cy="63" rx="8" ry="2.500" transform="rotate(-14 102 63)"/><ellipse cx="26" cy="47" rx="10" ry="3" transform="rotate(-22 26 47)"/><ellipse cx="48" cy="40" rx="5" ry="1.600"/><ellipse cx="104" cy="71.500" rx="5" ry="1.800" transform="rotate(-25 104 71.500)"/><ellipse cx="129" cy="78" rx="12" ry="2.200" transform="rotate(-14 129 78)"/><ellipse cx="140" cy="42" rx="6" ry="2" transform="rotate(-35 140 42)"/></g>
<g fill="none" stroke="#666" stroke-width="1.100" opacity=".85"><path d="M104 47c4-5 14-6 21-3c6 3 7 7 2 11"/><path d="M108 50c4-3 11-3 15 0"/><path d="M106 54c4 3 9 3 14 0"/><path d="M111 57l6 1"/></g></g>
</svg>
<div class="vl" style="left:-.4px;top:116px;letter-spacing:0.511px">Object for GCode Machining</div>
<div class="vl" style="left:-.6px;top:134px;letter-spacing:-0.050px">Name: Helical</div>
<div class="vl" style="left:-.4px;top:152px;letter-spacing:0.460px">Stock  Width: 7.6558</div>
<div class="vl" style="left:34.800px;top:170px;letter-spacing:0.154px">Height:7.6556</div>
<div class="vl" style="left:34.800px;top:188px;letter-spacing:0.216px">Depth: 0.0000</div>
<div class="vl" style="left:0px;top:206px;letter-spacing:0.236px">Approx Path : 203.64 mm’s</div>
<div class="vl" style="left:0px;top:224px;letter-spacing:0.400px">Approx Time : 0.44 Minutes</div>
<div class="vl" style="left:5px;top:242px;letter-spacing:0.478px">4th Axis Mode Machining</div>
<div class="vl" style="left:4.500px;top:260px;letter-spacing:0.384px">using Straight Flute Shaving</div>
<div class="vl" style="left:726px;top:4px;color:#5f7480;-webkit-text-stroke:.3px #5f7480;letter-spacing:0.241px">Calculations Complete.</div>
<div class="vl" style="left:705px;top:22px;letter-spacing:0.125px">One moment, Calculating.....</div>
<div class="vl" style="left:726px;top:40px;letter-spacing:0.241px">Calculations Complete.</div>
</div>
<div style="position:absolute;left:274px;top:148px;width:1646px;height:572px;border:1px solid #a8a8a8;border-right:2px solid #f2f2f2;border-bottom:2px solid #f2f2f2;pointer-events:none"></div>
<div style="position:absolute;left:275px;top:149px;width:1643px;height:569px;border-left:1px solid #6c6c6c;border-top:1px solid #6c6c6c;pointer-events:none"></div>
<!-- ===== properties ===== -->
<style>
#props .f{font-size:11px;line-height:13px;margin-top:1px;color:#000;white-space:nowrap}
#props .gb{border:1px solid #dcdcdc;border-radius:2px}
#props .gl{background:#f0f0f0;padding:1px 2px 0 2px;font-size:11px;line-height:13px;color:#000;white-space:nowrap}
#props .in{border:1px solid #abadb3;background:#fff;font-size:11px;line-height:18px;padding-left:5px;color:#000;white-space:nowrap;overflow:hidden}
#props .bt{border:1px solid #acacac;background:linear-gradient(#f0f0f0,#e5e5e5);font-size:11px;line-height:20px;text-align:center;color:#000;white-space:nowrap}
#props .rd{width:13px;height:13px;border-radius:50%;border:1px solid #333;background:#fff}
#props .rd.on:after{content:"";position:absolute;left:2.500px;top:2.500px;width:6px;height:6px;border-radius:50%;background:#111}
#props .ck{width:13px;height:13px;border:1px solid #333;background:#fff}
</style>
<div class="abs" id="props" style="position:absolute;left:0;top:0;width:1920px;height:1040px;pointer-events:none">
 <div style="left:274px;top:723.500px;width:1646px;height:26px;background:#ebecee"></div>
 <div class="t" style="left:278px;top:729px;color:#4a4a4a;letter-spacing:-0.140px">Properties</div>
 <svg style="left:1888px;top:731px" width="10" height="10" viewBox="0 0 10 10"><path d="M3 1H7V5.500H3ZM1.500 5.800H8.500M5 6V9.500M6.300 1V5.500" fill="none" stroke="#222" stroke-width="1.100"/></svg>
 <svg style="left:1905px;top:731px" width="10" height="10" viewBox="0 0 10 10"><path d="M1 1L9 9M9 1L1 9" stroke="#222" stroke-width="1.300"/></svg>
 <div style="left:274px;top:749px;width:1646px;height:21px;background:linear-gradient(#7a7a7a 0,#777 60%,#484848 100%)"></div>
 <div style="left:274px;top:770px;width:1645px;height:245.500px;background:#f0f0f0;border:2px solid #fff;border-top:none;border-left-width:1px"></div>
 <div style="left:1919px;top:770px;width:1px;height:245px;background:#a8a8a8"></div>
 <!-- nav buttons -->
 <svg style="left:276px;top:753px" width="64" height="14" viewBox="0 0 64 14"><g fill="#ececec"><rect x=".5" width="13.500" height="13.500"/><rect x="16.500" width="13.500" height="13.500"/><rect x="32.500" width="13.500" height="13.500"/><rect x="48.500" width="13.500" height="13.500"/></g><g fill="#333"><path d="M10.500 3V11L5.500 7Z"/><rect x="3.500" y="3" width="1.300" height="8"/><path d="M25.500 3V11L20.500 7Z"/><path d="M37.500 3V11L42.500 7Z"/><path d="M52 3V11L57 7Z"/><rect x="57.700" y="3" width="1.300" height="8"/></g></svg>
 <!-- tabs -->
 <svg style="left:341px;top:752px" width="260" height="18" viewBox="0 0 260 18">
  <defs><linearGradient id="tg" x1="0" y1="0" x2="0" y2="1"><stop offset="0" stop-color="#e4e7ec"/><stop offset="1" stop-color="#c2c6ce"/></linearGradient></defs>
  <path d="M1 17.500V2.500Q1 1 2.500 1H93Q96 1 98 3.500L108.500 17.500Z" fill="url(#tg)" stroke="#f4f4f4" stroke-width="1"/><path d="M98.800 3.500L109.500 18H0.500" fill="none" stroke="#4c4c4c" stroke-width="1"/>
  <path d="M100 5Q101 1 104 1H126Q129 1 130 3L131 17.500H109.500Z" fill="url(#tg)" stroke="#f4f4f4" stroke-width="1"/><path d="M109.500 18H131" fill="none" stroke="#4c4c4c" stroke-width="1"/>
  <path d="M130.500 18V3Q130.500 1 133 1H240Q243 1 245 3.500L257 18Z" fill="#f0f0f0" stroke="#fafafa" stroke-width="1"/>
 </svg>
 <div class="t" style="left:353px;top:754px;font-size:12.300px;color:#111;letter-spacing:0.071px">Selected Props</div>
 <div class="t" style="left:451px;top:754px;font-size:12.300px;color:#111;letter-spacing:0.193px">log</div>
 <div class="t" style="left:481px;top:754px;font-size:12.300px;color:#000;text-shadow:0 0 .3px #000;letter-spacing:0.149px">GCode Processing</div>

 <!-- Machining Modality -->
 <div class="gb" style="left:288px;top:788px;width:369px;height:32px"></div>
 <div class="gl" style="left:294px;top:781px;letter-spacing:-0.192px">Machining Modality</div>
 <div class="rd" style="left:309px;top:796px"></div><div class="f" style="left:325px;top:796px;letter-spacing:-0.125px">2.5D Profiling</div>
 <div class="rd" style="left:397px;top:796px"></div><div class="f" style="left:413px;top:796px;letter-spacing:-0.020px">3d Waterline</div>
 <div class="rd on" style="left:489px;top:796px"></div><div class="f" style="left:505px;top:796px;letter-spacing:0.010px">4th axis</div>
 <div class="rd" style="left:552px;top:796px"></div><div class="f" style="left:568px;top:796px;letter-spacing:-0.135px">Sliced 3d printer</div>
 <!-- Tool -->
 <div class="gb" style="left:288px;top:830px;width:101px;height:105px"></div>
 <div class="gl" style="left:295px;top:823px;letter-spacing:0.053px">Tool</div>
 <div class="f" style="left:295px;top:847px;letter-spacing:0.340px">Tool #</div><div class="in" style="left:337px;top:843px;width:38px;height:21px;padding-left:7px">1</div>
 <div class="f" style="left:299px;top:870px;letter-spacing:-0.172px">Dia</div><div class="in" style="left:325px;top:867px;width:51px;height:20px;padding-left:7px">1</div>
 <div class="f" style="left:318px;top:893px;letter-spacing:0.059px">Stepover</div>
 <div class="in" style="left:303px;top:908px;width:72px;height:21px;border-color:#acacac">50%</div>
 <svg style="left:362px;top:915px" width="9" height="7" viewBox="0 0 9 7"><path d="M1 1L4.500 5.200L8 1" fill="none" stroke="#333" stroke-width="1.700"/></svg>
 <!-- Parms -->
 <div class="gb" style="left:391px;top:830px;width:266px;height:107px"></div>
 <div class="gl" style="left:397px;top:823px;letter-spacing:-0.336px">Parms</div>
 <div class="f" style="left:413px;top:844px;letter-spacing:-0.115px">Final Depth</div>
 <div class="f" style="left:395px;top:867px;letter-spacing:-0.004px">Depth per pass:</div>
 <div class="f" style="left:399px;top:889px;letter-spacing:-0.216px">Spindle Speed:</div>
 <div class="f" style="left:413px;top:912px;letter-spacing:0.084px">Feedrate</div>
 <div class="in" style="left:477px;top:841px;width:51px;height:21px">-2.6</div>
 <div class="in" style="left:477px;top:864px;width:51px;height:21px">0.1</div>
 <div class="in" style="left:477px;top:886px;width:51px;height:21px">3000</div>
 <div class="in" style="left:477px;top:909px;width:51px;height:21px">150</div>
 <div class="f" style="left:546px;top:846px;letter-spacing:-0.346px">Final Pass</div>
 <div class="f" style="left:539px;top:869px;letter-spacing:-0.008px">Safe Height</div>
 <div class="f" style="left:539px;top:891px;letter-spacing:-0.177px">Plunge Rate</div>
 <div class="f" style="left:536px;top:911px;letter-spacing:-0.058px">Segmnt (4th)</div>
 <div class="in" style="left:600px;top:841px;width:51px;height:21px">0</div>
 <div class="in" style="left:600px;top:864px;width:51px;height:21px">5</div>
 <div class="in" style="left:600px;top:886px;width:51px;height:21px">100</div>
 <div class="in" style="left:600px;top:909px;width:51px;height:21px">5</div>
 <!-- 4th axis -->
 <div class="gb" style="left:661px;top:789px;width:92px;height:146px"></div>
 <div class="gl" style="left:668px;top:782px;letter-spacing:0.010px">4th axis</div>
 <div class="rd on" style="left:670px;top:803px"></div><div class="f" style="left:686px;top:803px;letter-spacing:0.143px">Tang. Bit</div>
 <div class="rd" style="left:670px;top:821px"></div><div class="f" style="left:686px;top:821px;letter-spacing:-0.008px">Tang. Saw</div>
 <div class="rd" style="left:670px;top:839px"></div><div class="f" style="left:686px;top:839px;letter-spacing:0.123px">Involute Bit</div>
 <div class="rd" style="left:670px;top:857px"></div><div class="f" style="left:686px;top:857px;letter-spacing:0.035px">Involute Saw</div>
 <div class="ck" style="left:670px;top:874px"></div><div class="f" style="left:686px;top:874px;letter-spacing:-0.032px">Rooting</div>
 <div class="ck" style="left:670px;top:891px"></div><svg style="left:672px;top:893px" width="9" height="9" viewBox="0 0 9 9"><path d="M.8 4.500L3.300 7.300L8.200 1" fill="none" stroke="#000" stroke-width="1.700"/></svg><div class="f" style="left:686px;top:891px;letter-spacing:0.063px">Toothing</div>
 <div class="f" style="left:667px;top:912px;letter-spacing:-0.279px">Clear</div>
 <div class="in" style="left:696px;top:909px;width:45px;height:21px;border-color:#acacac;padding-left:6px">10%</div>
 <div style="left:724px;top:910px;width:16px;height:19px;background:#fff"></div>
 <svg style="left:728px;top:916px" width="9" height="7" viewBox="0 0 9 7"><path d="M1 1L4.500 5.200L8 1" fill="none" stroke="#333" stroke-width="1.700"/></svg>
 <!-- Material Size -->
 <div class="gb" style="left:756px;top:788px;width:92px;height:146px"></div>
 <div class="gl" style="left:762px;top:781px;letter-spacing:-0.221px">Material Size</div>
 <div class="f" style="left:773px;top:807px">X</div><div class="in" style="left:793px;top:804px;width:44px;height:20px;padding-left:6px">10.6557</div>
 <div class="f" style="left:773px;top:830px">Y</div><div class="in" style="left:793px;top:825px;width:44px;height:20px;padding-left:6px">10.6556</div>
 <div class="f" style="left:773px;top:851px">Z</div><div class="in" style="left:793px;top:847px;width:44px;height:20px;padding-left:6px">2.6</div>
 <div class="f" style="left:767px;top:878px;letter-spacing:-0.196px">Rad</div><div class="in" style="left:793px;top:875px;width:44px;height:20px;padding-left:6px">3.82842</div>
 <div class="bt" style="left:769px;top:904px;width:73px;height:21px;letter-spacing:-0.020px">From Object</div>
 <!-- buttons -->
 <div class="bt" style="left:862px;top:788px;width:97px;height:21px;letter-spacing:-0.198px">Gen Paths</div>
 <div class="bt" style="left:874px;top:816px;width:73px;height:21px;letter-spacing:-0.164px">Regen</div>
 <div class="bt" style="left:874px;top:850px;width:73px;height:21px;letter-spacing:-0.733px">POST CODE</div>
 <div class="gb" style="left:864px;top:882px;width:92px;height:53px"></div>
 <div class="gl" style="left:870px;top:875px;letter-spacing:-0.157px">Origin</div>
 <div class="rd" style="left:888px;top:892px;width:12px;height:12px"></div>
 <div class="rd" style="left:927px;top:892px;width:12px;height:12px"></div>
 <div class="rd on" style="left:908.500px;top:903.500px;width:12px;height:12px"></div>
 <div class="rd" style="left:888px;top:916.500px;width:12px;height:12px"></div>
 <div class="rd" style="left:927px;top:916.500px;width:12px;height:12px"></div>
</div>
</body></html>
